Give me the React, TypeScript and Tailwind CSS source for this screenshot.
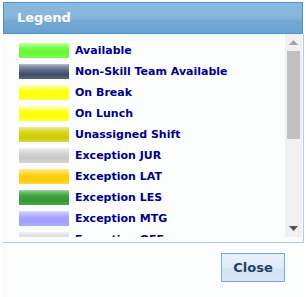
import React from "react";

const items = [
  { label: "Available", bg: "bg-[linear-gradient(#c8ffb0_0%,#a6ff80_12%,#7aff4a_30%,#66f533_60%,#7cff50_100%)]" },
  { label: "Non-Skill Team Available", bg: "bg-[linear-gradient(#b7c1d2_0%,#8a97ae_15%,#5d6c88_40%,#3f4d68_70%,#56647e_100%)]" },
  { label: "On Break", bg: "bg-[linear-gradient(#ffffc0_0%,#ffff80_15%,#ffff1a_40%,#ffff00_70%,#ffff40_100%)]" },
  { label: "On Lunch", bg: "bg-[linear-gradient(#ffffc0_0%,#ffff80_15%,#ffff1a_40%,#ffff00_70%,#ffff40_100%)]" },
  { label: "Unassigned Shift", bg: "bg-[linear-gradient(#eeee99_0%,#e0e060_15%,#d4d41a_40%,#cccc00_70%,#d6d640_100%)]" },
  { label: "Exception JUR", bg: "bg-[linear-gradient(#f2f2f2_0%,#e2e2e2_15%,#d2d2d2_40%,#c8c8c8_70%,#d4d4d4_100%)]" },
  { label: "Exception LAT", bg: "bg-[linear-gradient(#ffeb99_0%,#ffe060_15%,#ffd21a_40%,#ffcc00_70%,#ffd640_100%)]" },
  { label: "Exception LES", bg: "bg-[linear-gradient(#a6d6a6_0%,#70bb70_15%,#40a040_40%,#339933_70%,#4aa64a_100%)]" },
  { label: "Exception MTG", bg: "bg-[linear-gradient(#dcdcff_0%,#c4c4ff_15%,#a8a8ff_40%,#9e9eff_70%,#aeaeff_100%)]" },
  { label: "Exception OFF", bg: "bg-[linear-gradient(#f4f4f4_0%,#e6e6e6_15%,#d8d8d8_40%,#d0d0d0_70%,#dadada_100%)]" },
];

export default function App() {
  return (
    <div className="w-[306px] h-[297px] bg-white font-['DejaVu_Sans',sans-serif] pt-[2px]">
      {/* Title bar */}
      <div className="ml-[3px] w-[300px] h-[32px] border border-[#4a93d6] bg-[linear-gradient(#8bb8de_0%,#86b4dc_50%,#73a8d4_60%,#6aa2d0_100%)] flex items-center pl-[13px]">
        <span className="text-white font-bold text-[13px]">Legend</span>
      </div>

      <div className="flex ml-[3px] w-[301px] border-r border-[#a9cde8] bg-[#fbfdfd]">
        {/* List */}
        <div className="flex-1 h-[203px] overflow-hidden pt-[9px] pl-[16px]">
          <div className="flex flex-col gap-[6px]">
            {items.map((it) => (
              <div key={it.label} className="flex items-center h-[15px]">
                <div className={`w-[50px] h-[15px] ${it.bg}`} />
                <span className="ml-[6px] text-[11px] font-bold text-[#000088] leading-none whitespace-nowrap">
                  {it.label}
                </span>
              </div>
            ))}
          </div>
        </div>
        {/* Scrollbar */}
        <div className="w-[17px] h-[203px] bg-[#f0f0f0] flex flex-col items-center mr-[1px]">
          <div className="h-[17px] flex items-center justify-center">
            <svg width="9" height="5" viewBox="0 0 9 5">
              <path d="M0 5 L4.5 0 L9 5 Z" fill="#a3a3a3" />
            </svg>
          </div>
          <div className="w-[13px] h-[88px] bg-[#c1c1c1]" />
          <div className="flex-1" />
          <div className="h-[17px] flex items-center justify-center">
            <svg width="9" height="5" viewBox="0 0 9 5">
              <path d="M0 0 L9 0 L4.5 5 Z" fill="#505050" />
            </svg>
          </div>
        </div>
      </div>

      {/* Footer */}
      <div className="ml-[3px] w-[301px] h-[5px] border-r border-[#a9cde8] bg-[#fbfdfd]" />
      <div className="ml-[3px] w-[301px] border-t border-[#a9cde8] bg-[#fbfdfd] flex justify-end pt-[10px] pr-[19px] h-[55px]">
        <button className="w-[64px] h-[29px] border border-[#7aa7e4] bg-[linear-gradient(#e8f1fb_0%,#dfeaf8_50%,#d2e3f5_55%,#d6e6f6_100%)] text-[#1f3f64] font-bold text-[13px] font-['DejaVu_Sans',sans-serif]">
          Close
        </button>
      </div>
    </div>
  );
}
